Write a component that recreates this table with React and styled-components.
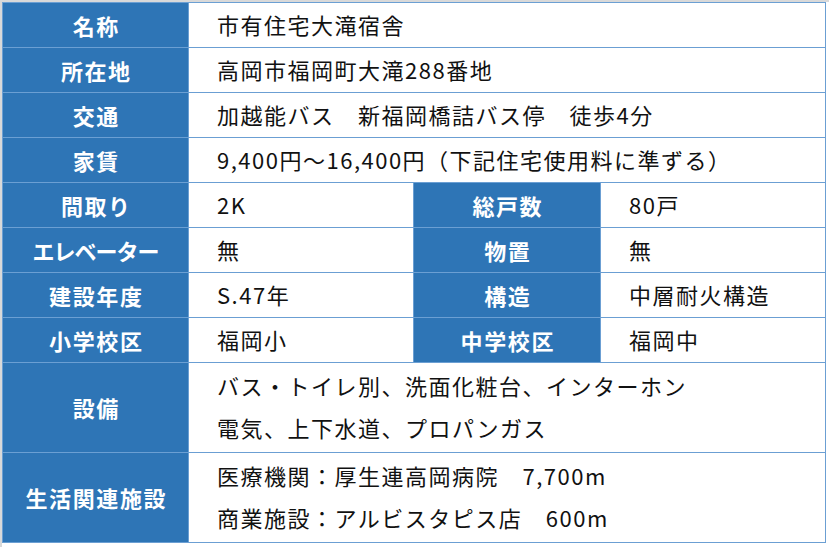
import React from "react";
import styled, { createGlobalStyle } from "styled-components";

const GlobalStyle = createGlobalStyle`
  body {
    margin: 0;
    background: #ffffff;
    font-family: "Noto Sans CJK JP", "Noto Sans", sans-serif;
  }
`

const Sheet = styled.div`
  width: 829px;
  height: 547px;
  box-sizing: border-box;
  border-top: 2px solid #d9d9d9;
  border-left: 2px solid #d9d9d9;
  background: #ffffff;
`

const Table = styled.div`
  display: grid;
  grid-template-columns: 185px 224px 186px 224px;
  grid-template-rows: repeat(8, 44px) 89px 89px;
  gap: 1px;
  padding: 1px;
  width: max-content;
  background-color: #6b9fd3;
`

const Head = styled.div`
  grid-column: ${(p) => p.$span || "auto"};
  background-color: #2e75b6;
  color: #ffffff;
  font-weight: 700;
  font-size: 22px;
  display: flex;
  align-items: center;
  justify-content: center;
  letter-spacing: ${(p) => (p.$tight ? "-1px" : "1.6px")};
  padding-left: ${(p) => (p.$tight ? "0" : "1.6px")};
  padding-bottom: 1px;
`

const Value = styled.div`
  grid-column: ${(p) => p.$span || "auto"};
  background-color: #ffffff;
  color: #111111;
  font-size: 22px;
  display: flex;
  flex-direction: column;
  justify-content: center;
  padding-left: 28px;
  padding-bottom: 3px;
  line-height: 42px;
  white-space: nowrap;
  letter-spacing: 1.5px;
`

const rows = [
  { label: "名称", value: "市有住宅大滝宿舎" },
  { label: "所在地", value: "高岡市福岡町大滝288番地" },
  { label: "交通", value: "加越能バス　新福岡橋詰バス停　徒歩4分" },
  { label: "家賃", value: "9,400円～16,400円（下記住宅使用料に準ずる）" },
]

const pairs = [
  ["間取り", "2K", "総戸数", "80戸"],
  ["エレベーター", "無", "物置", "無"],
  ["建設年度", "S.47年", "構造", "中層耐火構造"],
  ["小学校区", "福岡小", "中学校区", "福岡中"],
]

const multi = [
  { label: "設備", lines: ["バス・トイレ別、洗面化粧台、インターホン", "電気、上下水道、プロパンガス"] },
  { label: "生活関連施設", lines: ["医療機関：厚生連高岡病院　7,700m", "商業施設：アルビスタピス店　600m"] },
]

export default function App() {
  return (
    <Sheet>
      <GlobalStyle />
      <Table>
        {rows.map((r) => (
          <React.Fragment key={r.label}>
            <Head>{r.label}</Head>
            <Value $span="span 3">{r.value}</Value>
          </React.Fragment>
        ))}
        {pairs.map((p) => (
          <React.Fragment key={p[0]}>
            <Head $tight={p[0] === "エレベーター"}>{p[0]}</Head>
            <Value>{p[1]}</Value>
            <Head>{p[2]}</Head>
            <Value>{p[3]}</Value>
          </React.Fragment>
        ))}
        {multi.map((m) => (
          <React.Fragment key={m.label}>
            <Head>{m.label}</Head>
            <Value $span="span 3">
              {m.lines.map((l) => <span key={l}>{l}</span>)}
            </Value>
          </React.Fragment>
        ))}
      </Table>
    </Sheet>
  )
}
